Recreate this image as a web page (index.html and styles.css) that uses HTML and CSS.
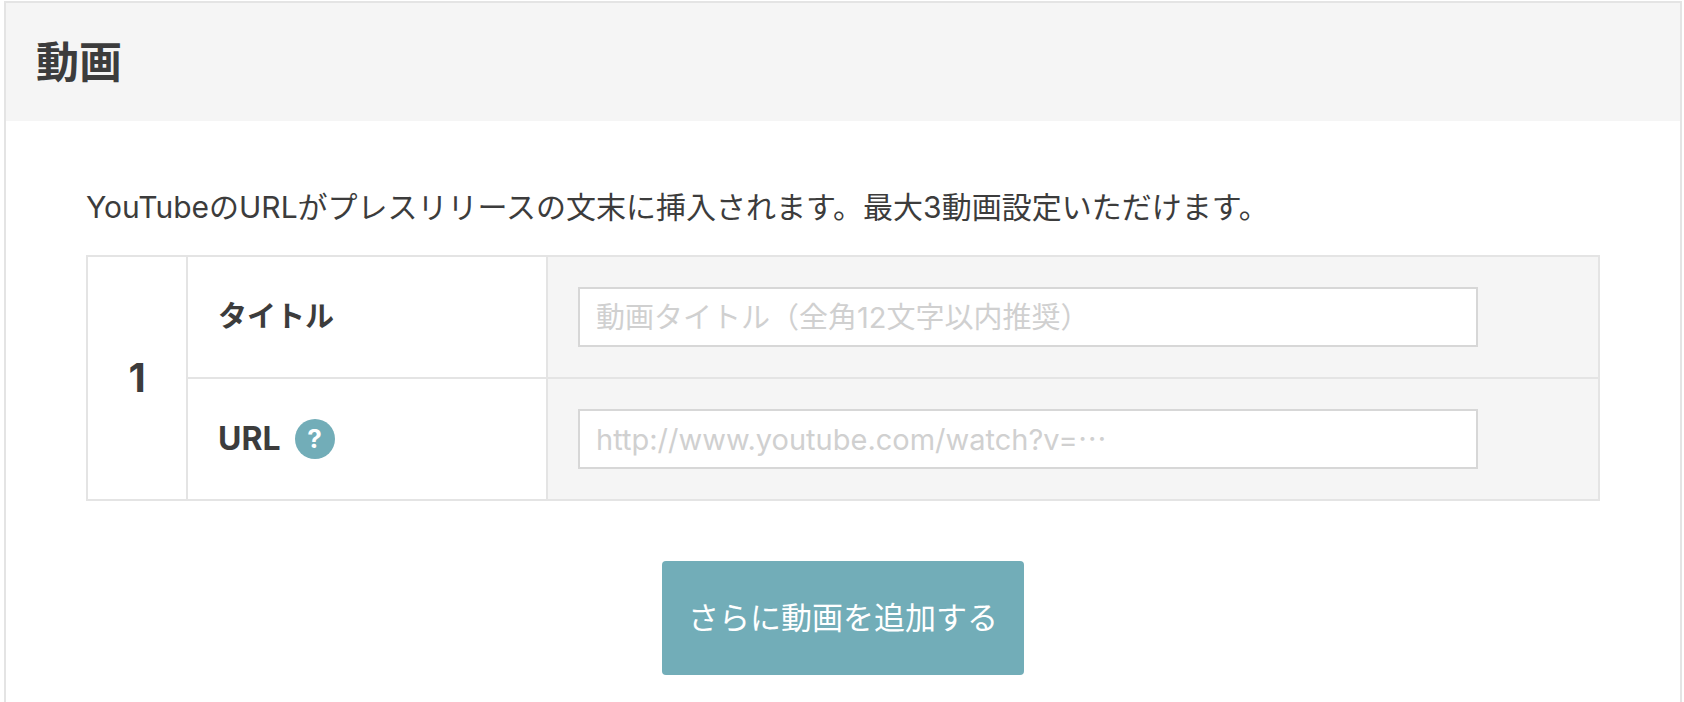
FILE: index.html
```html
<!DOCTYPE html>
<html lang="ja">
<head>
    <meta charset="UTF-8">
    <meta name="viewport" content="width=device-width, initial-scale=1">
    <title>動画</title>
    <link rel="stylesheet" href="styles.css">
</head>
<body>
<section class="panel">
    <h2 class="panel-title">動画</h2>
    <div class="panel-body">
        <p class="lead">YouTubeのURLがプレスリリースの文末に挿入されます。最大3動画設定いただけます。</p>
        <table class="movie">
            <tr>
                <th class="num" rowspan="2" scope="rowgroup">1</th>
                <th class="name" scope="row"><label for="movie-title">タイトル</label></th>
                <td><input type="text" id="movie-title" placeholder="動画タイトル（全角12文字以内推奨）"></td>
            </tr>
            <tr>
                <th class="name" scope="row">
                    <div class="name-inner">
                        <label class="en" for="movie-url">URL</label>
                        <button type="button" class="help">?</button>
                    </div>
                </th>
                <td><input type="text" id="movie-url" placeholder="http://www.youtube.com/watch?v=⋯"></td>
            </tr>
        </table>
        <button type="button" class="add">さらに動画を追加する</button>
    </div>
</section>
</body>
</html>
```
FILE: styles.css
```css
* {
    box-sizing: border-box;
}

html, body {
    height: 100%;
    margin: 0;
}

body {
    padding: 1px 2px 0 4px;
    background: #fff;
    color: #3c3c3c;
    font-family: Inter, "Noto Sans CJK JP", sans-serif;
    font-size: 29px;
    line-height: 40px;
}

button, input {
    font-family: inherit;
}

.panel {
    min-height: 100%;
    border: 2px solid #e4e4e4;
    border-bottom: none;
}

.panel-title {
    margin: 0;
    padding: 30px;
    background: #f5f5f5;
    font-size: 43px;
    line-height: 58px;
}

.panel-body {
    padding: 66px 80px 24px;
}

.lead {
    margin: 0 0 28px;
    font-size: 30px;
}

.movie {
    width: 100%;
    border-collapse: collapse;
    table-layout: fixed;
}

.movie th, .movie td {
    border: 2px solid #e4e4e4;
}

.movie .num {
    width: 100px;
    padding: 0;
    font-size: 40px;
}

.movie .name {
    width: 360px;
    padding: 0 30px;
    text-align: left;
}

.movie td {
    padding: 30px;
    background: #f5f5f5;
}

.movie input {
    display: block;
    width: 100%;
    max-width: 900px;
    height: 60px;
    padding: 0 16px;
    border: 2px solid #d7d7d7;
    border-radius: 0;
    background: #fff;
    color: #3c3c3c;
    font-size: 29px;
}

.movie input::placeholder {
    color: #d0d0d0;
    opacity: 1;
}

.name-inner {
    display: flex;
    align-items: center;
    gap: 14px;
}

.name-inner .en {
    font-size: 32px;
}

.help {
    width: 40px;
    height: 40px;
    padding: 0;
    border: none;
    border-radius: 50%;
    background: #72adb8;
    color: #fff;
    font-size: 26px;
    font-weight: bold;
    line-height: 40px;
    cursor: pointer;
}

.add {
    display: block;
    margin: 60px auto 0;
    padding: 36px 26px;
    border: none;
    border-radius: 4px;
    background: #72adb8;
    color: #fff;
    font-size: 31px;
    line-height: 42px;
    cursor: pointer;
}

.add:hover, .help:hover {
    opacity: 0.8;
}
```
